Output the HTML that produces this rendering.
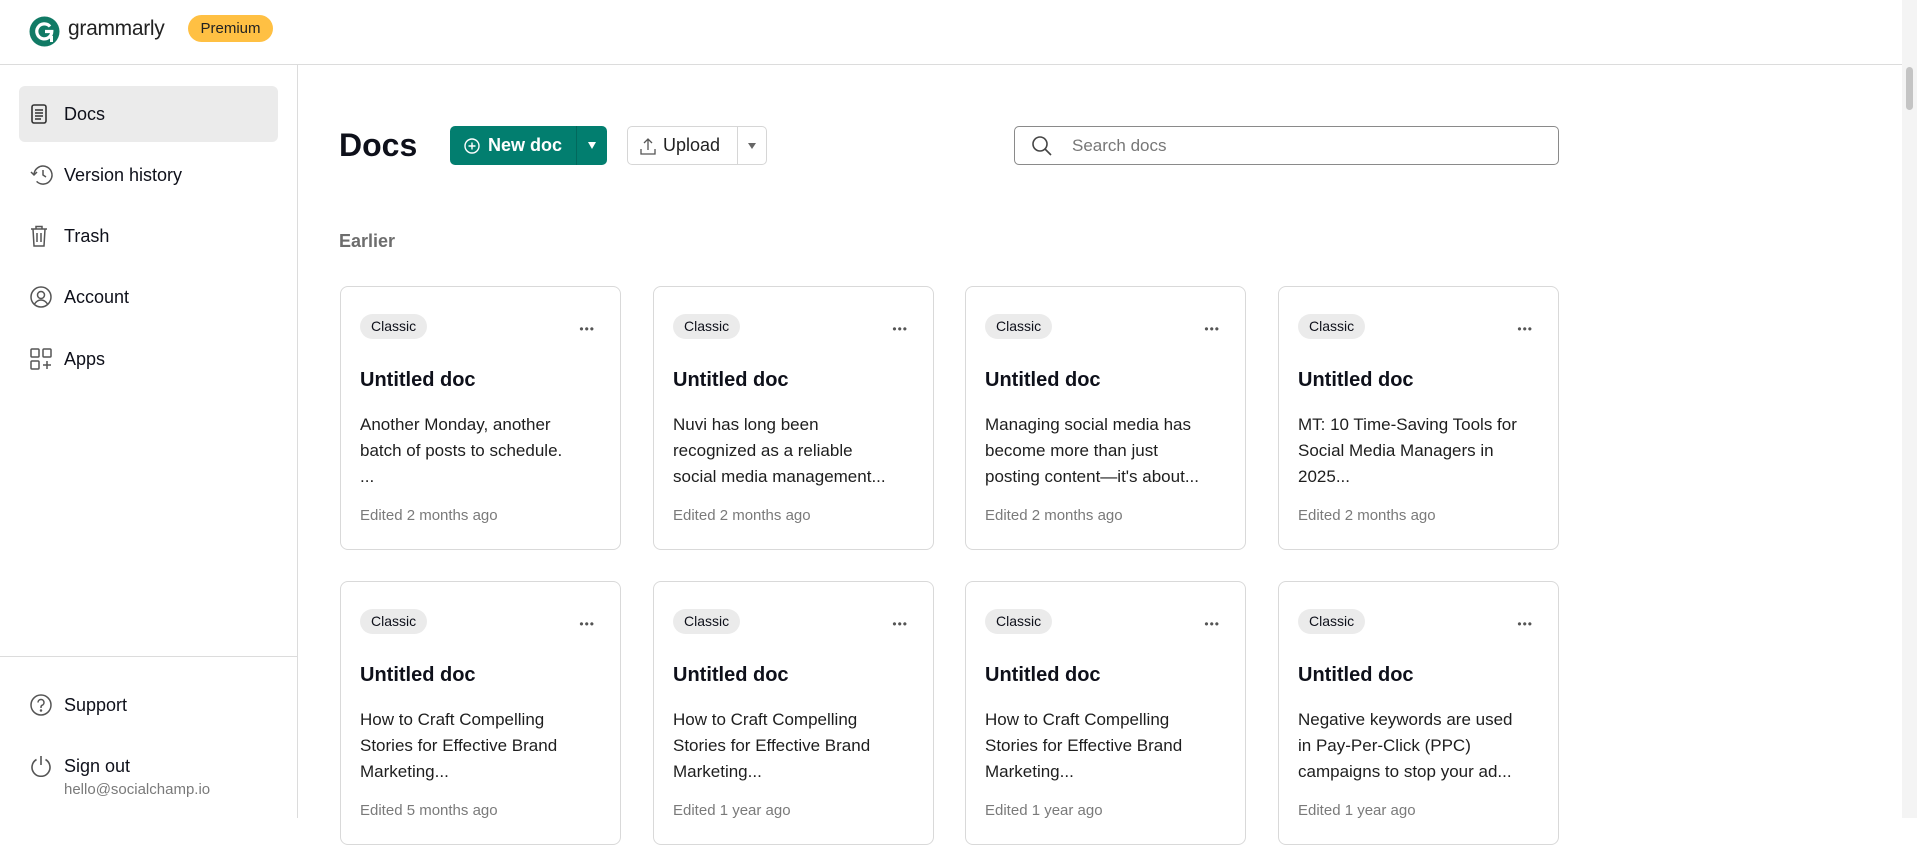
<!DOCTYPE html>
<html><head><meta charset="utf-8"><style>
*{margin:0;padding:0;box-sizing:border-box}
body{width:1917px;height:818px;overflow:hidden;background:#fff;font-family:"Liberation Sans",sans-serif;color:#0e101a;position:relative}
.abs{position:absolute}
.top{left:0;top:0;width:1902px;height:65px;border-bottom:1px solid #dcdcdc}
.side{left:0;top:65px;width:298px;height:753px;border-right:1px solid #dcdcdc}
.nav{position:absolute;left:19px;width:259px;height:56px;border-radius:6px;display:flex;align-items:center;padding-left:45px;font-size:18px;color:#0e101a}
.nav svg{position:absolute;left:11px;top:50%;transform:translateY(-50%)}
.btn{position:absolute;top:126px;height:39px;border-radius:5px;display:flex;align-items:center;font-size:18px}
.card{position:absolute;width:281px;height:264px;border:1px solid #d9d9d9;border-radius:8px}
.pill{position:absolute;left:19px;top:27px;height:25px;padding:0 11px;background:#ebebeb;border-radius:13px;font-size:14px;line-height:25px;color:#0e101a}
.dots{position:absolute;right:25px;top:37px;font-size:12px;letter-spacing:1px;color:#555;line-height:10px}
.ttl{position:absolute;left:19px;top:82px;font-size:20px;font-weight:bold}
.bd{position:absolute;left:19px;top:125px;white-space:nowrap;font-size:17px;line-height:26px;color:#1e1e1e}
.ed{position:absolute;left:19px;top:220px;font-size:15px;color:#7a7a7a}
</style></head><body>
<div class="abs top"></div>
<svg class="abs" style="left:29px;top:16px" width="31" height="31" viewBox="0 0 31 31"><circle cx="15.5" cy="15.5" r="15" fill="#117a65"/><path d="M21 10.5a7.5 7.5 0 1 0 1.8 5H16" fill="none" stroke="#fff" stroke-width="3.2"/><path d="M22.5 20v6" stroke="#fff" stroke-width="3"/></svg>
<div class="abs" style="left:68px;top:17px;font-size:21px;color:#222;letter-spacing:-0.3px">grammarly</div>
<div class="abs" style="left:188px;top:15px;width:85px;height:27px;background:#ffc043;border-radius:14px;font-size:15px;line-height:27px;text-align:center;color:#222">Premium</div>
<div class="abs" style="left:1902px;top:0;width:15px;height:818px;background:#f4f4f4"></div>
<div class="abs" style="left:1906px;top:67px;width:7px;height:43px;background:#c4c4c4;border-radius:4px"></div>

<div class="abs side"></div>
<div class="nav" style="top:86px;background:#ebebeb"><svg width="18" height="20" viewBox="0 0 18 20" fill="none" stroke="#333" stroke-width="1.6"><rect x="2" y="1" width="14" height="18" rx="2"/><path d="M5 6h8M5 9h8M5 12h8M5 15h6"/></svg>Docs</div>
<div class="nav" style="top:147px"><svg width="24" height="22" viewBox="0 0 24 22" fill="none" stroke="#555" stroke-width="1.5"><path d="M4 11a9 9 0 1 1 2.6 6.4"/><path d="M1 8l3 3 3-3"/><path d="M13 6v5l3 2"/></svg>Version history</div>
<div class="nav" style="top:208px"><svg width="18" height="22" viewBox="0 0 18 22" fill="none" stroke="#555" stroke-width="1.5"><path d="M1 4h16M6 4V1.5h6V4M3 4l1 17h10l1-17M7 8v9M11 8v9"/></svg>Trash</div>
<div class="nav" style="top:269px"><svg width="22" height="22" viewBox="0 0 22 22" fill="none" stroke="#555" stroke-width="1.5"><circle cx="11" cy="11" r="10"/><circle cx="11" cy="9" r="3.5"/><path d="M4.5 18c2-3 4-4 6.5-4s4.5 1 6.5 4"/></svg>Account</div>
<div class="nav" style="top:331px"><svg width="22" height="22" viewBox="0 0 22 22" fill="none" stroke="#555" stroke-width="1.5"><rect x="1" y="1" width="8" height="8" rx="1"/><rect x="13" y="1" width="8" height="8" rx="1"/><rect x="1" y="13" width="8" height="8" rx="1"/><path d="M17 13v8M13 17h8"/></svg>Apps</div>
<div class="abs" style="left:0;top:656px;width:298px;border-top:1px solid #dcdcdc"></div>
<div class="nav" style="top:677px"><svg width="22" height="22" viewBox="0 0 22 22" fill="none" stroke="#555" stroke-width="1.5"><circle cx="11" cy="11" r="10"/><path d="M8 8.5a3 3 0 1 1 4 2.8c-.8.4-1 1-1 2v.7"/><circle cx="11" cy="16.5" r=".5" fill="#555"/></svg>Support</div>
<div class="nav" style="top:738px"><svg width="22" height="22" viewBox="0 0 22 22" fill="none" stroke="#555" stroke-width="1.6"><path d="M6.5 4.5a9 9 0 1 0 9 0M11 1v9"/></svg>Sign out</div>
<div class="abs" style="left:64px;top:781px;font-size:15px;color:#7a7a7a">hello@socialchamp.io</div>

<div class="abs" style="left:339px;top:127px;font-size:32px;font-weight:bold">Docs</div>
<div class="btn" style="left:450px;width:157px;background:#027e6f;color:#fff;font-weight:bold">
<svg style="margin-left:14px" width="16" height="16" viewBox="0 0 16 16" fill="none" stroke="#fff" stroke-width="1.4"><circle cx="8" cy="8" r="7"/><path d="M8 4.5v7M4.5 8h7"/></svg>
<span style="margin-left:8px">New doc</span>
<div style="position:absolute;left:126px;top:0;width:1px;height:39px;background:#02695d"></div>
<div style="position:absolute;left:138px;top:16px;border:4px solid transparent;border-top:7px solid #fff;border-bottom:0"></div></div>
<div class="btn" style="left:627px;width:140px;border:1px solid #d6d6d6;color:#222">
<svg style="margin-left:12px" width="16" height="18" viewBox="0 0 16 18" fill="none" stroke="#555" stroke-width="1.3"><path d="M8 13V2M4 6l4-4 4 4M1 12v5h14v-5"/></svg>
<span style="margin-left:7px">Upload</span>
<div style="position:absolute;left:109px;top:0;width:1px;height:37px;background:#d6d6d6"></div>
<div style="position:absolute;left:120px;top:16px;border:4px solid transparent;border-top:6px solid #666;border-bottom:0"></div></div>
<div class="btn" style="left:1014px;width:545px;border:1px solid #8a8a8a;color:#777;font-size:17px">
<svg style="margin-left:16px" width="22" height="22" viewBox="0 0 22 22" fill="none" stroke="#444" stroke-width="1.6"><circle cx="9" cy="9" r="7"/><path d="M14 14l6 6"/></svg>
<span style="margin-left:19px">Search docs</span></div>
<div class="abs" style="left:339px;top:231px;font-size:18px;font-weight:bold;color:#6d6d6d">Earlier</div>

<div class="card" style="left:340px;top:286px"><div class="pill">Classic</div><div class="dots">•••</div><div class="ttl">Untitled doc</div><div class="bd">Another Monday, another<br>batch of posts to schedule.<br>...</div><div class="ed">Edited 2 months ago</div></div>
<div class="card" style="left:653px;top:286px"><div class="pill">Classic</div><div class="dots">•••</div><div class="ttl">Untitled doc</div><div class="bd">Nuvi has long been<br>recognized as a reliable<br>social media management...</div><div class="ed">Edited 2 months ago</div></div>
<div class="card" style="left:965px;top:286px"><div class="pill">Classic</div><div class="dots">•••</div><div class="ttl">Untitled doc</div><div class="bd">Managing social media has<br>become more than just<br>posting content—it's about...</div><div class="ed">Edited 2 months ago</div></div>
<div class="card" style="left:1278px;top:286px"><div class="pill">Classic</div><div class="dots">•••</div><div class="ttl">Untitled doc</div><div class="bd">MT: 10 Time-Saving Tools for<br>Social Media Managers in<br>2025...</div><div class="ed">Edited 2 months ago</div></div>

<div class="card" style="left:340px;top:581px"><div class="pill">Classic</div><div class="dots">•••</div><div class="ttl">Untitled doc</div><div class="bd">How to Craft Compelling<br>Stories for Effective Brand<br>Marketing...</div><div class="ed">Edited 5 months ago</div></div>
<div class="card" style="left:653px;top:581px"><div class="pill">Classic</div><div class="dots">•••</div><div class="ttl">Untitled doc</div><div class="bd">How to Craft Compelling<br>Stories for Effective Brand<br>Marketing...</div><div class="ed">Edited 1 year ago</div></div>
<div class="card" style="left:965px;top:581px"><div class="pill">Classic</div><div class="dots">•••</div><div class="ttl">Untitled doc</div><div class="bd">How to Craft Compelling<br>Stories for Effective Brand<br>Marketing...</div><div class="ed">Edited 1 year ago</div></div>
<div class="card" style="left:1278px;top:581px"><div class="pill">Classic</div><div class="dots">•••</div><div class="ttl">Untitled doc</div><div class="bd">Negative keywords are used<br>in Pay-Per-Click (PPC)<br>campaigns to stop your ad...</div><div class="ed">Edited 1 year ago</div></div>
</body></html>
